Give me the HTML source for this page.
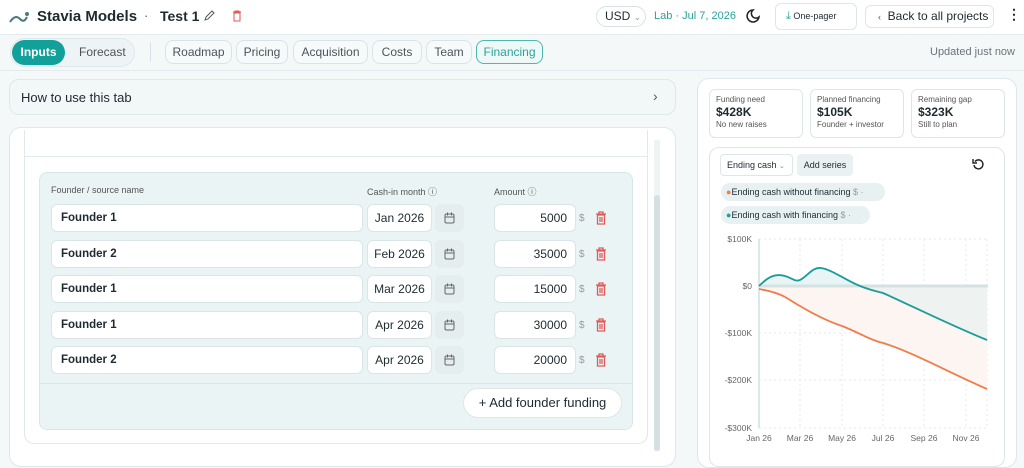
<!DOCTYPE html>
<html><head><meta charset="utf-8"><style>
*{box-sizing:border-box;margin:0;padding:0}
body{width:1024px;height:451px;overflow:hidden;background:#f4f8f9;font-family:"Liberation Sans",sans-serif;color:#1d2a30;position:relative}
.abs{position:absolute}
.hdr{left:0;top:0;width:1024px;height:35px;background:#fff;border-bottom:1px solid #e2ecee}
.pill{position:absolute;border:1px solid #d8e3e5;border-radius:8px;background:#f7fafa;font-size:12px;color:#4a5558;text-align:center;line-height:22px;height:24px;top:40px}
.card{position:absolute;background:#fff;border:1px solid #dde8ea;border-radius:10px}
.inp{position:absolute;background:#fff;border:1px solid #d9e5e7;border-radius:6px;height:28px;font-size:12px;line-height:26px}
.mc{position:absolute;top:89px;height:49px;border:1px solid #dde6e8;border-radius:6px;background:#fff;padding:5px 6px;font-size:8px;color:#555}
.mc b{display:block;font-size:12px;color:#1d2a30;margin:1px 0}
</style></head><body>
<div class="abs hdr"></div>
<svg class="abs" style="left:9px;top:9px" width="22" height="16"><path d="M1 13 C5 7,8 7,11 10 S16 12,18 8" stroke="#4a7a7c" stroke-width="2" fill="none"/><circle cx="18" cy="5" r="2" fill="#4a7a7c"/></svg>
<div class="abs" style="left:37px;top:8px;font-size:15px;font-weight:bold;color:#1d2a30">Stavia Models</div>
<div class="abs" style="left:144px;top:8px;font-size:13px;color:#555">·</div>
<div class="abs" style="left:160px;top:8px;font-size:14px;font-weight:bold">Test 1</div>
<svg class="abs" style="left:203px;top:10px" width="12" height="12"><path d="M2 10l1-3 6-6 2 2-6 6z" stroke="#555" fill="none"/></svg>
<svg class="abs" style="left:232px;top:10px" width="10" height="12"><path d="M1 2h8M3 2V1h4v1M2 3h6v8H2z" stroke="#e05a5a" fill="none"/></svg>
<div class="abs" style="left:596px;top:6px;width:50px;height:21px;border:1px solid #d8e1e3;border-radius:11px;font-size:12px;line-height:19px;padding-left:8px">USD <span style="color:#999;font-size:9px">⌄</span></div>
<div class="abs" style="left:654px;top:10px;font-size:11px;color:#2aa39c">Lab · Jul 7, 2026</div>
<svg class="abs" style="left:745px;top:8px" width="16" height="16"><path d="M8 2a6 6 0 1 0 6 7a4.5 4.5 0 0 1-6-7z" stroke="#222" stroke-width="1.5" fill="none"/></svg>
<div class="abs" style="left:775px;top:3px;width:82px;height:27px;border:1px solid #dfe6e8;border-radius:6px;font-size:9px;line-height:25px;padding-left:10px"><span style="color:#2aa39c;font-size:11px">⤓</span> One-pager</div>
<div class="abs" style="left:865px;top:5px;width:129px;height:23px;border:1px solid #dfe6e8;border-radius:6px;font-size:12px;line-height:21px;padding-left:12px"><span style="font-size:9px;color:#555">‹</span>&nbsp; Back to all projects</div>
<div class="abs" style="left:1007px;top:6px;font-size:14px;font-weight:bold">⋮</div>
<div class="abs" style="left:0;top:70px;width:1024px;height:1px;background:#e2ecee"></div>
<div class="abs" style="left:10px;top:38px;width:125px;height:29px;border:1px solid #dfe8ea;border-radius:15px;background:#eef4f5"></div>
<div class="abs" style="left:12px;top:40px;width:53px;height:25px;border-radius:13px;background:#12a09a;color:#fff;font-size:12px;font-weight:bold;line-height:25px;text-align:center">Inputs</div>
<div class="abs" style="left:79px;top:45px;font-size:12px;color:#4a5558">Forecast</div>
<div class="abs" style="left:150px;top:42px;width:1px;height:20px;background:#d8e3e5"></div>
<div class="pill" style="left:165px;width:67px">Roadmap</div>
<div class="pill" style="left:236px;width:52px">Pricing</div>
<div class="pill" style="left:293px;width:75px">Acquisition</div>
<div class="pill" style="left:372px;width:50px">Costs</div>
<div class="pill" style="left:426px;width:46px">Team</div>
<div class="pill" style="left:476px;width:67px;border-color:#4cb8b0;color:#2aa39c;background:#eef8f7">Financing</div>
<div class="abs" style="left:930px;top:46px;font-size:11px;color:#6a7578">Updated just now</div>
<!-- left -->
<div class="card" style="left:9px;top:79px;width:667px;height:36px;background:#f2f7f8"><span class="abs" style="left:11px;top:10px;font-size:13px">How to use this tab</span><span class="abs" style="left:643px;top:8px;font-size:14px;color:#555">›</span></div>
<div class="card" style="left:9px;top:127px;width:667px;height:340px;border-radius:12px"></div>
<div class="abs" style="left:24px;top:130px;width:624px;height:314px;border:1px solid #dfe8ea;border-top:none;border-radius:0 0 10px 10px;background:#fff"></div>
<div class="abs" style="left:24px;top:156px;width:624px;height:1px;background:#dfe8ea"></div>
<div class="abs" style="left:654px;top:140px;width:6px;height:311px;background:#eef3f4"></div>
<div class="abs" style="left:654px;top:195px;width:6px;height:256px;background:#d5e0e2;border-radius:3px"></div>
<div class="abs" style="left:39px;top:172px;width:594px;height:258px;background:#eaf4f5;border:1px solid #d8e6e8;border-radius:8px"></div>
<div class="abs" style="left:39px;top:383px;width:594px;height:1px;background:#d8e6e8"></div>
<div class="abs" style="left:51px;top:185px;font-size:9px;color:#555">Founder / source name</div>
<div class="abs" style="left:367px;top:185px;font-size:9px;color:#555">Cash-in month ⓘ</div>
<div class="abs" style="left:494px;top:185px;font-size:9px;color:#555">Amount ⓘ</div>
<div id="rows"></div>
<div class="abs" style="left:463px;top:388px;width:159px;height:30px;border:1px solid #dde6e8;border-radius:15px;background:#fff;font-size:13px;line-height:28px;text-align:center">+ Add founder funding</div>
<!-- right -->
<div class="card" style="left:697px;top:78px;width:320px;height:390px;border-radius:12px"></div>
<div class="mc" style="left:709px;width:94px">Funding need<b>$428K</b>No new raises</div>
<div class="mc" style="left:810px;width:94px">Planned financing<b>$105K</b>Founder + investor</div>
<div class="mc" style="left:911px;width:94px">Remaining gap<b>$323K</b>Still to plan</div>
<div class="abs" style="left:709px;top:147px;width:296px;height:320px;border:1px solid #dde6e8;border-radius:10px;background:#fff"></div>
<div class="abs" style="left:720px;top:154px;width:73px;height:22px;border:1px solid #dde6e8;border-radius:4px;font-size:9px;line-height:20px;padding-left:6px">Ending cash <span style="color:#888;font-size:7px">⌄</span></div>
<div class="abs" style="left:797px;top:154px;width:56px;height:22px;border-radius:4px;background:#e9f1f2;font-size:9px;line-height:22px;text-align:center">Add series</div>
<svg class="abs" style="left:972px;top:158px" width="13" height="13"><path d="M3 3.5A4.5 4.5 0 1 1 2 7" stroke="#222" stroke-width="1.4" fill="none"/><path d="M1 1v4h4" stroke="#222" stroke-width="1.4" fill="none"/></svg>
<div class="abs" style="left:721px;top:183px;width:164px;height:18px;border-radius:9px;background:#e8f1f2;font-size:9px;line-height:18px;padding-left:5px"><span style="color:#f07c4a">●</span>Ending cash without financing <span style="color:#999">$ ·</span></div>
<div class="abs" style="left:721px;top:206px;width:149px;height:18px;border-radius:9px;background:#e8f1f2;font-size:9px;line-height:18px;padding-left:5px"><span style="color:#17a2a0">●</span>Ending cash with financing <span style="color:#999">$ ·</span></div>
<svg class="abs" style="left:700px;top:225px" width="324" height="226" font-family="Liberation Sans" font-size="8.5" fill="#666">
<g stroke="#e3eaec" stroke-dasharray="2 3"><line x1="59" x2="288" y1="14" y2="14"/><line x1="59" x2="288" y1="108" y2="108"/><line x1="59" x2="288" y1="155" y2="155"/><line x1="59" x2="288" y1="203" y2="203"/><line x1="100" x2="100" y1="14" y2="203"/><line x1="142" x2="142" y1="14" y2="203"/><line x1="183" x2="183" y1="14" y2="203"/><line x1="224" x2="224" y1="14" y2="203"/><line x1="266" x2="266" y1="14" y2="203"/><line x1="287" x2="287" y1="14" y2="203"/></g>
<line x1="59" x2="59" y1="14" y2="203" stroke="#cfe0e2" stroke-width="1.5"/>
<path d="M59 64 C70 66,78 68,85 72 C92 76,96 79,100 81 C115 90,130 97,142 101 C160 108,170 115,183 118 C210 126,250 148,287 164 L287 61 L59 61Z" fill="#fdf5f1"/>
<path d="M160 61 C170 65,175 66,183 68 C210 80,250 100,287 115 L287 61Z" fill="#eef2f1"/>
<path d="M59 61 C68 52,75 48,85 51 C92 53,95 57,100 55 C108 51,112 42,121 43 C133 45,145 55,160 61Z" fill="#e8f5f4"/>
<line x1="59" x2="288" y1="61" y2="61" stroke="#d5e2e3" stroke-width="3"/>
<path d="M59 61 C68 52,75 48,85 51 C92 53,95 57,100 55 C108 51,112 42,121 43 C133 45,145 55,160 61 C170 65,175 66,183 68 C210 80,250 100,287 115" stroke="#1a9d9a" stroke-width="1.8" fill="none"/>
<path d="M59 64 C70 66,78 68,85 72 C92 76,96 79,100 81 C115 90,130 97,142 101 C160 108,170 115,183 118 C210 126,250 148,287 164" stroke="#f07c4a" stroke-width="1.8" fill="none"/>
<g text-anchor="end"><text x="52" y="17">$100K</text><text x="52" y="64">$0</text><text x="52" y="111">-$100K</text><text x="52" y="158">-$200K</text><text x="52" y="206">-$300K</text></g>
<g text-anchor="middle"><text x="59" y="216">Jan 26</text><text x="100" y="216">Mar 26</text><text x="142" y="216">May 26</text><text x="183" y="216">Jul 26</text><text x="224" y="216">Sep 26</text><text x="266" y="216">Nov 26</text></g>
</svg>
<script>
var d=[["Founder 1","Jan 2026","5000"],["Founder 2","Feb 2026","35000"],["Founder 1","Mar 2026","15000"],["Founder 1","Apr 2026","30000"],["Founder 2","Apr 2026","20000"]],h="";
d.forEach(function(r,i){var y=204+i*35.5;
h+='<div class="inp" style="left:51px;top:'+y+'px;width:312px;padding-left:9px;font-weight:bold;font-size:11.5px">'+r[0]+'</div>'+
'<div class="inp" style="left:367px;top:'+y+'px;width:65px;text-align:center">'+r[1]+'</div>'+
'<div class="inp" style="left:435px;top:'+y+'px;width:29px;background:#e4eeef;border-color:#e4eeef"></div>'+
'<svg class="abs" style="left:444px;top:'+(y+8)+'px" width="11" height="12"><rect x="1" y="2" width="9" height="9" rx="1.5" stroke="#666" fill="none"/><path d="M1 5h9M3.5 0.5v3M7.5 0.5v3" stroke="#666"/></svg>'+
'<div class="inp" style="left:494px;top:'+y+'px;width:82px;text-align:right;padding-right:8px">'+r[2]+'</div>'+
'<div class="abs" style="left:579px;top:'+(y+9)+'px;font-size:10px;color:#999">$</div>'+
'<svg class="abs" style="left:595px;top:'+(y+7)+'px" width="12" height="14"><path d="M1 3h10M4 3V1h4v2M2.5 4h7v9h-7zM5 6v5M7 6v5" stroke="#e05a5a" stroke-width="1.3" fill="none"/></svg>';});
document.getElementById("rows").innerHTML=h;
</script>
</body></html>
